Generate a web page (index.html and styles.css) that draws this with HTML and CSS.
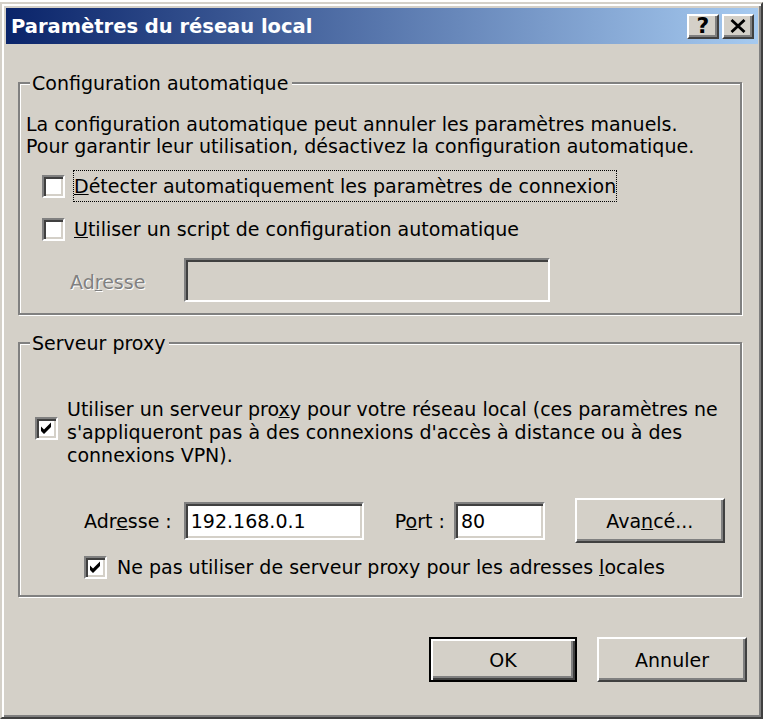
FILE: index.html
```html
<!DOCTYPE html>
<html lang="fr">
<head>
    <meta charset="UTF-8">
    <title>Paramètres du réseau local</title>
    <link rel="stylesheet" href="styles.css">
</head>
<body>
    <div class="window">
        <div class="titlebar">
            <span class="title">Paramètres du réseau local</span>
            <div class="title-buttons">
                <span class="tbtn raised">?</span>
                <span class="tbtn raised">
                    <svg width="16" height="14" viewBox="0 0 16 14">
                        <path d="M1.5 1 L14.5 13 M14.5 1 L1.5 13" stroke="#000" stroke-width="2.8" fill="none"/>
                    </svg>
                </span>
            </div>
        </div>

        <div class="dialog">
            <fieldset class="group">
                <legend>Configuration automatique</legend>
                <div class="group-body auto-body">
                    <p class="intro">La configuration automatique peut annuler les paramètres manuels.<br>Pour garantir leur utilisation, désactivez la configuration automatique.</p>
                    <div class="check-row">
                        <span class="check"></span>
                        <span class="check-label focus"><u>D</u>étecter automatiquement les paramètres de connexion</span>
                    </div>
                    <div class="check-row row-script">
                        <span class="check"></span>
                        <span class="check-label"><u>U</u>tiliser un script de configuration automatique</span>
                    </div>
                    <div class="script-row">
                        <span class="disabled">Ad<u>r</u>esse</span>
                        <span class="textbox textbox-disabled"></span>
                    </div>
                </div>
            </fieldset>

            <fieldset class="group group-proxy">
                <legend>Serveur proxy</legend>
                <div class="group-body proxy-body">
                    <div class="proxy-row">
                        <span class="check">
                            <svg width="15" height="15" viewBox="0 0 15 15"><polygon points="2,5.5 5,8.5 12,1.5 12,6 5,13 2,10" fill="#000"/></svg>
                        </span>
                        <p class="proxy-text">Utiliser un serveur pro<u>x</u>y pour votre réseau local (ces paramètres ne<br>s'appliqueront pas à des connexions d'accès à distance ou à des<br>connexions VPN).</p>
                    </div>
                    <div class="address-row">
                        <span class="field-label">Adr<u>e</u>sse :</span>
                        <span class="textbox textbox-address">192.168.0.1</span>
                        <span class="field-label port-label">P<u>o</u>rt :</span>
                        <span class="textbox textbox-port">80</span>
                        <span class="button raised btn-advanced">Ava<u>n</u>cé...</span>
                    </div>
                    <div class="check-row row-local">
                        <span class="check">
                            <svg width="15" height="15" viewBox="0 0 15 15"><polygon points="2,5.5 5,8.5 12,1.5 12,6 5,13 2,10" fill="#000"/></svg>
                        </span>
                        <span class="check-label">Ne pas utiliser de serveur proxy pour les adresses <u>l</u>ocales</span>
                    </div>
                </div>
            </fieldset>

            <div class="dialog-buttons">
                <span class="button btn-default">OK</span>
                <span class="button raised">Annuler</span>
            </div>
        </div>
    </div>
</body>
</html>
```

FILE: styles.css
```css
body {
    margin: 0;
    padding: 0;
    background-color: #fff;
    font-family: "DejaVu Sans", Verdana, sans-serif;
    font-size: 19px;
    color: #000;
}

.window {
    box-sizing: border-box;
    width: 763px;
    height: 717px;
    margin-top: 2px;
    padding: 4px 3px 0 4px;
    background-color: #d4d0c8;
    border: 2px solid;
    border-color: #d4d0c8 #404040 #404040 #d4d0c8;
    box-shadow: inset 2px 2px #fff, inset -2px -2px #808080;
}

/* title bar */
.titlebar {
    display: flex;
    align-items: center;
    justify-content: space-between;
    height: 36px;
    padding: 0 4px 0 5px;
    background: linear-gradient(to right, #0a246a, #a6caf0);
    color: #fff;
}

.title {
    font-weight: bold;
    font-size: 19.5px;
    white-space: nowrap;
}

.title-buttons {
    display: flex;
    gap: 3px;
}

.tbtn {
    box-sizing: border-box;
    display: flex;
    align-items: center;
    justify-content: center;
    width: 32px;
    height: 25px;
    background-color: #d4d0c8;
    color: #000;
    font-weight: bold;
    font-size: 22px;
    line-height: 1;
}

.raised {
    border: 2px solid;
    border-color: #fff #404040 #404040 #fff;
    box-shadow: inset -2px -2px #808080;
}

/* dialog body */
.dialog {
    padding: 28px 16px 0 12px;
}

.group {
    margin: 0;
    padding: 0;
    min-width: 0;
    border: 2px solid #808080;
    box-shadow: inset 1px 1px #fff, 1px 1px #fff;
}

.group legend {
    margin-left: 10px;
    padding: 0 4px 0 2px;
    line-height: 22px;
    background-color: #d4d0c8;
}

.group-proxy {
    margin-top: 17px;
}

.group-body {
    padding-left: 6px;
    padding-right: 6px;
}

.auto-body {
    padding-top: 19px;
    padding-bottom: 11px;
}

.proxy-body {
    padding-top: 44px;
    padding-bottom: 12px;
}

.intro {
    margin: 0;
    line-height: 22px;
    white-space: nowrap;
}

.check-row {
    display: flex;
    align-items: center;
    height: 32px;
    margin-top: 13px;
}

.row-script {
    margin-top: 11px;
}

.check-row .check {
    margin-left: 16px;
}

.check-label {
    margin-left: 8px;
    padding: 4px 0;
    line-height: 22px;
    border: 1px solid transparent;
    white-space: nowrap;
}

.check-label.focus {
    border: 1px dotted #000;
}

.check {
    box-sizing: border-box;
    flex: none;
    width: 23px;
    height: 23px;
    background-color: #fff;
    border: 2px solid;
    border-color: #808080 #fff #fff #808080;
    box-shadow: inset 2px 2px #404040, inset -2px -2px #d4d0c8;
}

.check svg {
    display: block;
    margin: 2px;
}

.script-row {
    display: flex;
    align-items: center;
    margin-top: 13px;
}

.disabled {
    margin-left: 44px;
    padding-top: 3px;
    color: #808080;
    text-shadow: 1px 1px 0 #fff;
}

.textbox {
    box-sizing: border-box;
    display: flex;
    align-items: center;
    padding-left: 5px;
    background-color: #fff;
    border: 2px solid;
    border-color: #808080 #fff #fff #808080;
    box-shadow: inset 2px 2px #404040, inset -2px -2px #d4d0c8;
    white-space: nowrap;
}

.textbox-disabled {
    width: 366px;
    height: 44px;
    margin-left: 39px;
    background-color: #d4d0c8;
}

/* proxy */
.proxy-row {
    display: flex;
    align-items: flex-start;
}

.proxy-row .check {
    margin-left: 9px;
    margin-top: 19px;
}

.proxy-text {
    margin: 0 0 0 9px;
    line-height: 23px;
    white-space: nowrap;
}

.address-row {
    display: flex;
    align-items: center;
    height: 45px;
    margin-top: 31px;
}

.field-label {
    white-space: nowrap;
}

.address-row .field-label:first-child {
    margin-left: 58px;
}

.textbox-address {
    width: 180px;
    height: 38px;
    margin-left: 12px;
}

.port-label {
    margin-left: 31px;
}

.textbox-port {
    width: 91px;
    height: 38px;
    margin-left: 9px;
}

.button {
    box-sizing: border-box;
    display: flex;
    align-items: center;
    justify-content: center;
    height: 45px;
    background-color: #d4d0c8;
    white-space: nowrap;
}

.btn-advanced {
    width: 150px;
    margin-left: 30px;
}

.row-local {
    margin-top: 8px;
}

.row-local .check {
    margin-left: 58px;
}

.row-local .check-label {
    margin-left: 9px;
}

/* ok / cancel */
.dialog-buttons {
    display: flex;
    justify-content: flex-end;
    gap: 20px;
    margin-top: 40px;
    margin-right: -5px;
}

.dialog-buttons .button {
    width: 150px;
}

.dialog-buttons .btn-default {
    width: 148px;
    border: 2px solid #000;
    box-shadow: inset 2px 2px #fff, inset -2px -2px #404040, inset -4px -4px #808080;
}
```
